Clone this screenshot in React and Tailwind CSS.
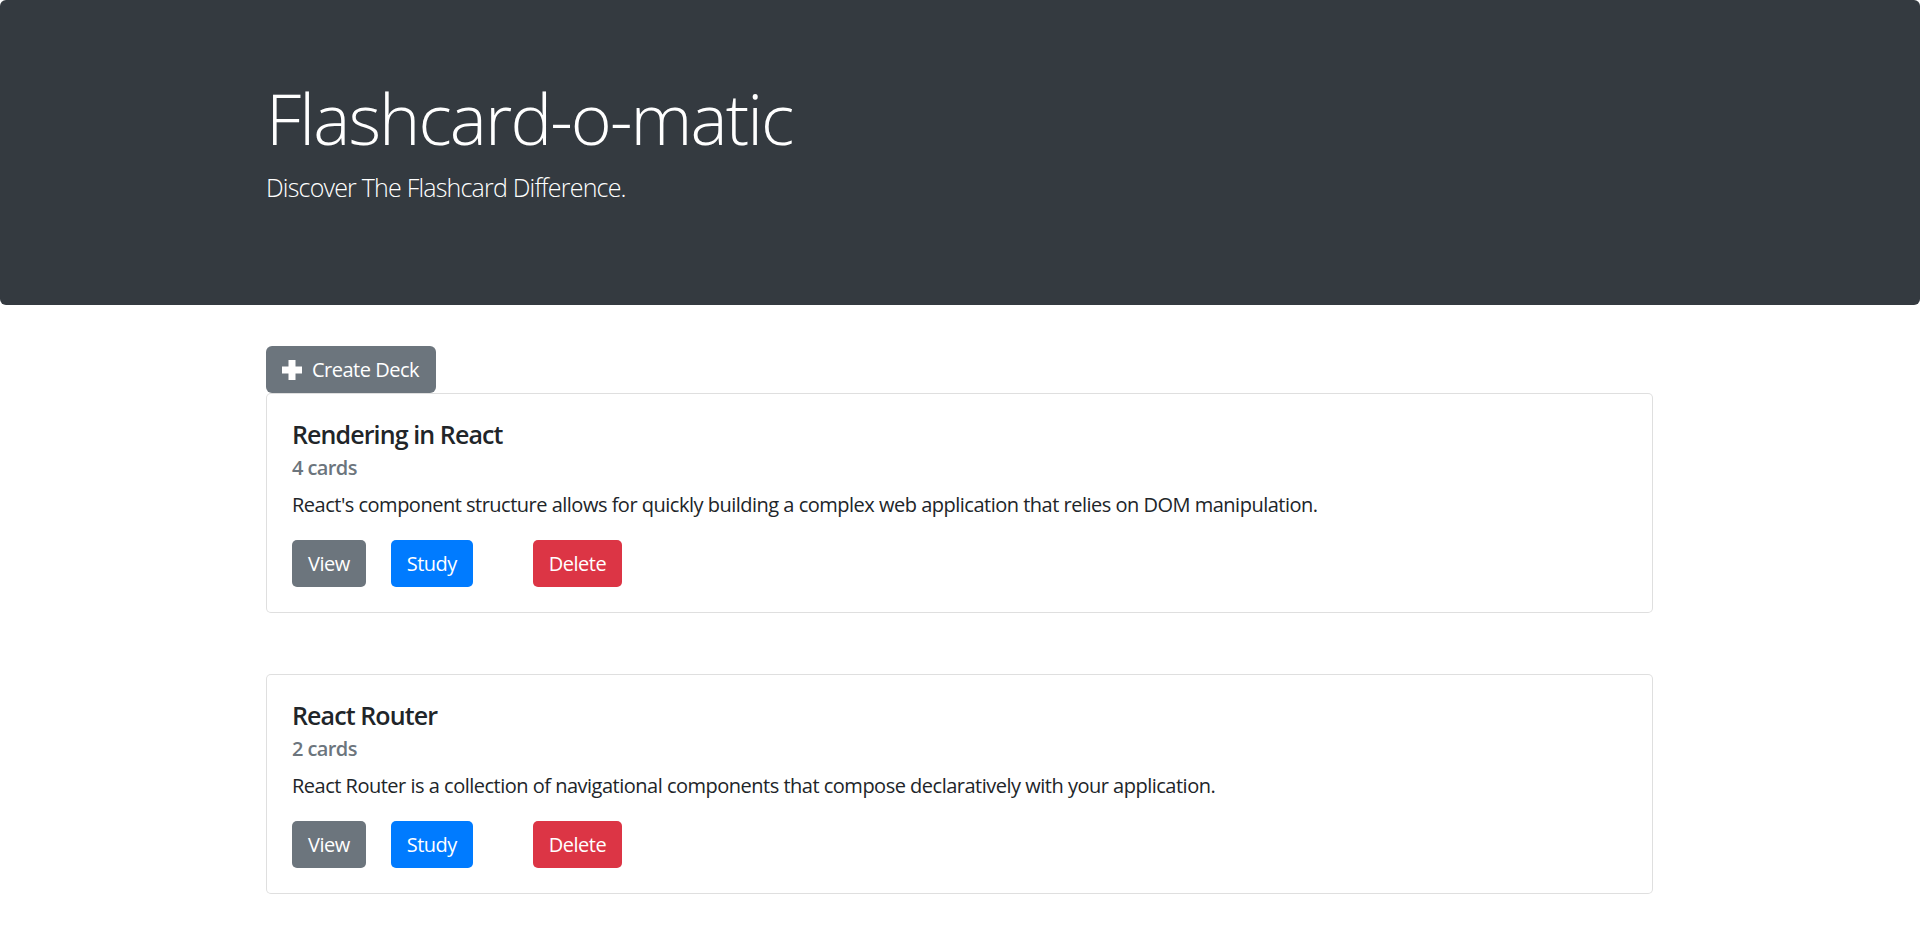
import { useState } from 'react'

const decks = [
  {
    id: 1,
    name: 'Rendering in React',
    cards: 4,
    description: "React's component structure allows for quickly building a complex web application that relies on DOM manipulation.",
  },
  {
    id: 2,
    name: 'React Router',
    cards: 2,
    description: 'React Router is a collection of navigational components that compose declaratively with your application.',
  },
]

function PlusIcon() {
  return (
    <svg width="20" height="20" viewBox="0 0 20 20" fill="#fff" aria-hidden="true">
      <rect x="6.5" y="0" width="7" height="20" />
      <rect x="0" y="6.5" width="20" height="7" />
    </svg>
  )
}

function DeckCard({ deck }) {
  return (
    <div className="border border-[rgba(0,0,0,0.125)] rounded-[5px] bg-white px-[25px] pt-[25px] pb-[25px]">
      <h5 className="text-[25px] leading-[30px] font-semibold tracking-[-0.9px] text-[#212529] mb-[7px]">{deck.name}</h5>
      <h6 className="text-[20px] leading-[24px] font-semibold tracking-[-0.6px] text-[#6c757d] mb-[10px]">{deck.cards} cards</h6>
      <p className="text-[20px] leading-[30px] tracking-[-0.5px] text-[#212529] mb-[20px]">{deck.description}</p>
      <div className="flex items-center">
        <button className="h-[47px] px-[16px] rounded-[5px] bg-[#6c757d] text-white text-[20px] leading-[30px] tracking-[-0.5px]">View</button>
        <button className="h-[47px] px-[16px] ml-[25px] rounded-[5px] bg-[#007bff] text-white text-[20px] leading-[30px] tracking-[-0.5px]">Study</button>
        <button className="h-[47px] px-[16px] ml-[60px] rounded-[5px] bg-[#dc3545] text-white text-[20px] leading-[30px] tracking-[-0.5px]">Delete</button>
      </div>
    </div>
  )
}

export default function App() {
  const [list] = useState(decks)

  return (
    <div className="min-h-screen bg-white font-['Segoe_UI','Open_Sans',sans-serif]">
      {/* Header */}
      <div className="bg-[#343a40] rounded-[6px] h-[305px] pt-[76px]">
        <div className="ml-[266px]">
          <h1 className="text-[70px] leading-[84px] font-light tracking-[-1.9px] text-white mb-[9px]">Flashcard-o-matic</h1>
          <p className="text-[25px] leading-[37.5px] font-light tracking-[-0.8px] text-white">Discover The Flashcard Difference.</p>
        </div>
      </div>

      {/* Decks */}
      <div className="w-[1387px] ml-[266px] mt-[41px] pb-[40px]">
        <button className="flex items-center h-[47px] pl-[16px] pr-[17px] rounded-[6px] bg-[#6c757d] text-white text-[20px] leading-[30px] tracking-[-0.5px]">
          <PlusIcon />
          <span className="ml-[10px]">Create Deck</span>
        </button>
        <div className="flex flex-col gap-[61px]">
          {list.map(d => (
            <DeckCard key={d.id} deck={d} />
          ))}
        </div>
      </div>
    </div>
  )
}
